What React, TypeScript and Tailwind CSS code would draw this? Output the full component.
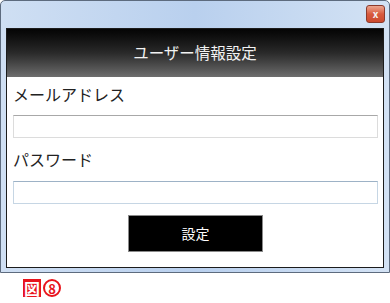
import { ReactElement } from "react";

const font = { fontFamily: '"Noto Sans CJK JP", "Noto Sans", sans-serif' };

export default function App(): ReactElement {
  return (
    <div className="w-[390px] h-[303px] bg-white flex flex-col" style={font}>
      {/* Window frame */}
      <div className="w-[390px] h-[273px] flex flex-col border border-[#5d6b7e] rounded-t-[5px] bg-gradient-to-r from-[#cfdff3] via-[#b9d0ee] to-[#d3e2f4] px-[5px] pb-[4px]">
        {/* Title bar */}
        <div className="h-[27px] flex items-start justify-end pt-[4px]">
          <button className="w-[19px] h-[18px] -mr-[1px] rounded-[3px] border border-[#8b3a2c] bg-gradient-to-b from-[#eba58f] via-[#d85a3e] to-[#cc4a2e] flex items-center justify-center text-[#f4f4f4] text-[10px] font-bold leading-none">
            x
          </button>
        </div>

        {/* Client area */}
        <div className="flex-1 flex flex-col border border-[#1c1c1c] bg-white">
          <div className="h-[48px] flex items-center justify-center bg-gradient-to-b from-[#050505] via-[#2a2a2a] to-[#6e6e6e] text-[#f2f2f2] text-[15.5px]">
            ユーザー情報設定
          </div>

          <div className="flex flex-col pl-[6px] pr-[5px] pt-[5px]">
            <label className="h-[24px] leading-[24px] text-[16px] text-[#222]">
              メールアドレス
            </label>
            <input
              className="mt-[9px] h-[23px] border border-[#dcdcdc] border-t-[#a8a8a8] bg-white outline-none"
              type="text"
            />
            <label className="mt-[9px] h-[24px] leading-[24px] text-[16px] text-[#222]">
              パスワード
            </label>
            <input
              className="mt-[10px] h-[23px] border border-[#c6d6e4] border-t-[#9db2c6] bg-white outline-none"
              type="password"
            />
            <button className="mt-[11px] mx-auto w-[135px] h-[37px] bg-black border border-[#8a8a8a] text-white text-[14px]">
              設定
            </button>
          </div>
        </div>
      </div>

      {/* Figure caption */}
      <div className="flex items-center pl-[23px] pt-[6px] text-[#e8141c] font-bold leading-none">
        <span className="w-[18px] h-[18px] bg-[#e8141c] text-white text-[16px] flex items-center justify-center">
          図
        </span>
        <span className="ml-[2px] w-[18px] h-[18px] rounded-full border-[2px] border-[#e8141c] text-[13px] flex items-center justify-center">
          8
        </span>
      </div>
    </div>
  );
}
